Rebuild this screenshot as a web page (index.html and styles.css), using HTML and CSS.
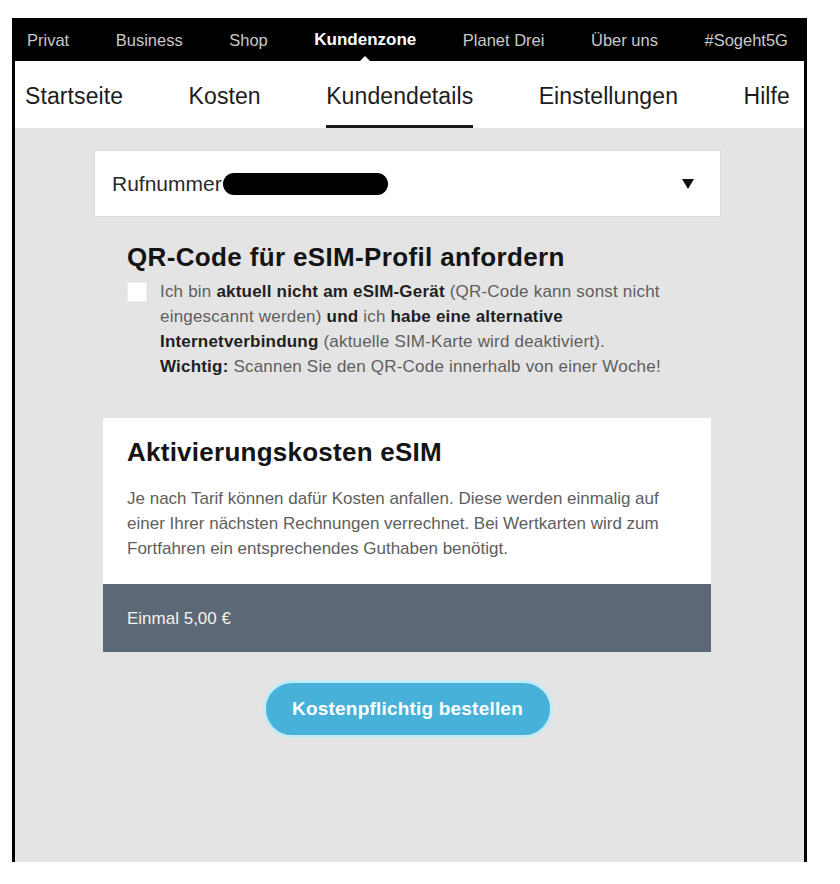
FILE: index.html
```html
<!DOCTYPE html>
<html lang="de">
<head>
<meta charset="utf-8">
<title>Kundenzone – eSIM</title>
<link rel="stylesheet" href="styles.css">
</head>
<body>
<div class="frame">
  <nav class="topnav">
    <a href="#">Privat</a>
    <a href="#">Business</a>
    <a href="#">Shop</a>
    <a href="#" class="active">Kundenzone</a>
    <a href="#">Planet Drei</a>
    <a href="#">Über uns</a>
    <a href="#">#Sogeht5G</a>
  </nav>
  <nav class="subnav">
    <a href="#">Startseite</a>
    <a href="#">Kosten</a>
    <a href="#" class="active">Kundendetails</a>
    <a href="#">Einstellungen</a>
    <a href="#">Hilfe</a>
  </nav>
  <main class="content">
    <div class="select">
      <span class="select-label">Rufnummer</span>
      <span class="redact"></span>
      <svg class="caret" width="12" height="10" viewBox="0 0 12 10"><path d="M0 0H12L6 10Z" fill="#111"/></svg>
    </div>

    <section class="qr">
      <h2 class="title">QR-Code für eSIM-Profil anfordern</h2>
      <div class="check">
        <span class="box"></span>
        <p class="text">Ich bin <b>aktuell nicht am eSIM-Gerät</b> (QR-Code kann sonst nicht<br>eingescannt werden) <b>und</b> ich <b>habe eine alternative</b><br><b>Internetverbindung</b> (aktuelle SIM-Karte wird deaktiviert).<br><b>Wichtig:</b> Scannen Sie den QR-Code innerhalb von einer Woche!</p>
      </div>
    </section>

    <section class="card">
      <div class="card-body">
        <h2 class="title">Aktivierungskosten eSIM</h2>
        <p class="text">Je nach Tarif können dafür Kosten anfallen. Diese werden einmalig auf<br>einer Ihrer nächsten Rechnungen verrechnet. Bei Wertkarten wird zum<br>Fortfahren ein entsprechendes Guthaben benötigt.</p>
      </div>
      <div class="card-foot">Einmal 5,00 €</div>
    </section>

    <div class="actions">
      <button class="btn" type="button">Kostenpflichtig bestellen</button>
    </div>
  </main>
</div>
</body>
</html>
```

FILE: styles.css
```css
* { box-sizing: border-box; }

html, body {
  margin: 0;
  padding: 0;
  background: #fff;
  font-family: "Liberation Sans", Arial, Helvetica, sans-serif;
}

.frame {
  margin: 18px 0 0 12px;
  width: 795px;
  height: 844px;
  background: #e4e4e4;
  border-left: 3px solid #000;
  border-right: 3px solid #000;
  display: flex;
  flex-direction: column;
}

/* top navigation */
.topnav {
  height: 43px;
  background: #000;
  display: flex;
  justify-content: space-between;
  align-items: stretch;
  padding: 0 16px 0 12px;
}
.topnav a {
  position: relative;
  display: flex;
  align-items: center;
  color: #c9c9c9;
  text-decoration: none;
  font-size: 16.5px;
  padding-top: 1px;
}
.topnav a.active {
  color: #fff;
  font-weight: bold;
  font-size: 17px;
}
.topnav a.active::after {
  content: "";
  position: absolute;
  left: 50%;
  bottom: 0;
  margin-left: -5px;
  border-left: 5px solid transparent;
  border-right: 5px solid transparent;
  border-bottom: 5px solid #fff;
}

/* sub navigation */
.subnav {
  height: 67px;
  background: #fff;
  display: flex;
  justify-content: space-between;
  padding: 0 14px 0 10px;
}
.subnav a {
  display: flex;
  align-items: center;
  padding-top: 6px;
  border-bottom: 3px solid transparent;
  color: #1c1c1c;
  text-decoration: none;
  font-size: 23px;
  letter-spacing: 0.1px;
}
.subnav a.active {
  border-bottom-color: #1a1a1a;
}

/* content */
.content {
  flex: 1;
  padding: 22px 83px 0 79px;
}

.select {
  height: 67px;
  background: #fff;
  border: 1px solid #d9d9d9;
  display: flex;
  align-items: center;
  padding: 0 26px 0 17px;
}
.select-label {
  font-size: 21px;
  color: #2a2a2a;
}
.redact {
  width: 165px;
  height: 22px;
  margin-left: 1px;
  border-radius: 11px;
  background: #000;
}
.caret {
  margin-left: auto;
}

.title {
  margin: 0;
  font-size: 26px;
  line-height: 32px;
  font-weight: bold;
  letter-spacing: 0.25px;
  color: #141414;
}

.text {
  margin: 0;
  font-size: 17px;
  line-height: 25px;
  color: #5e5e5e;
}
.text b {
  color: #1f1f1f;
}

.qr {
  padding-left: 33px;
  margin-top: 24px;
}
.qr .title {
  margin-bottom: 6px;
  letter-spacing: 0.35px;
}
.qr .text {
  letter-spacing: 0.2px;
}
.check {
  display: flex;
  align-items: flex-start;
  gap: 13px;
}
.box {
  flex: none;
  width: 20px;
  height: 20px;
  margin-top: 3px;
  background: #fff;
  border: 1px solid #ececec;
}

.card {
  margin: 39px 10px 0 9px;
  background: #fff;
}
.card-body {
  padding: 18px 24px 23px;
}
.card-body .text {
  margin-top: 18px;
}
.card-foot {
  height: 68px;
  background: #5d6876;
  color: #f2f2f2;
  font-size: 17px;
  display: flex;
  align-items: center;
  padding: 2px 24px 0;
}

.actions {
  display: flex;
  justify-content: center;
  margin-top: 28px;
}
.btn {
  width: 290px;
  height: 58px;
  border-radius: 29px;
  border: 3px solid #c3ebf6;
  background: #47b1d9;
  color: #fff;
  font-family: "Liberation Sans", Arial, sans-serif;
  font-size: 19px;
  font-weight: bold;
  letter-spacing: 0.2px;
  cursor: pointer;
}
```
